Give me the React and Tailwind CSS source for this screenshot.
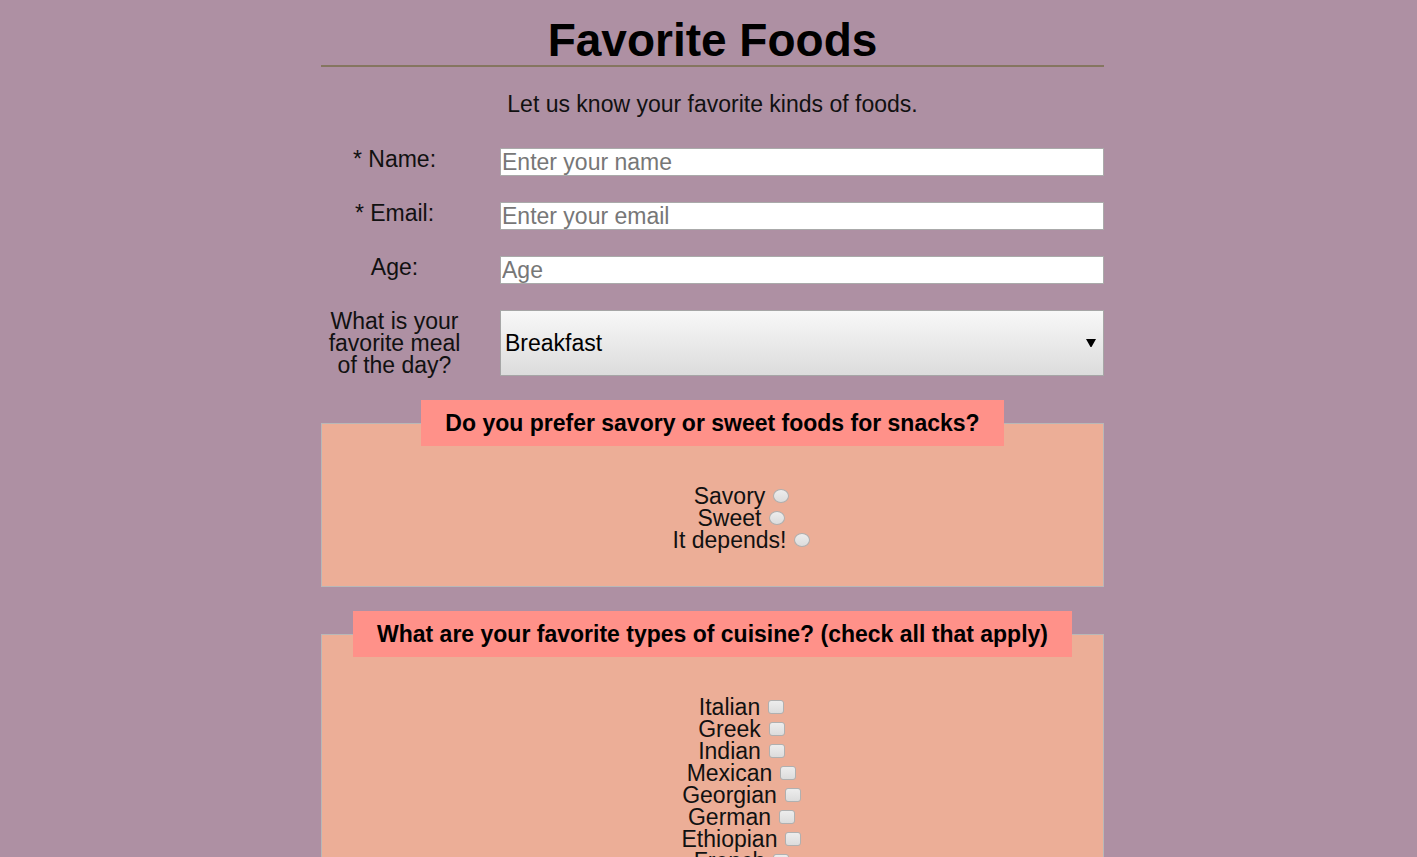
import React from "react";

const textFields = [
  { id: "name", label: "* Name:", placeholder: "Enter your name", type: "text" },
  { id: "email", label: "* Email:", placeholder: "Enter your email", type: "email" },
  { id: "age", label: "Age:", placeholder: "Age", type: "text" },
];

const snacks = ["Savory", "Sweet", "It depends!"];
const cuisines = ["Italian", "Greek", "Indian", "Mexican", "Georgian", "German", "Ethiopian", "French"];

function Choice({ type, name, label }) {
  const shape = type === "radio" ? "rounded-[50%]" : "rounded-[3px]";
  return (
    <li className="flex h-[22px] items-center justify-center gap-2">
      <label htmlFor={`${name}-${label}`}>{label}</label>
      <input
        id={`${name}-${label}`}
        type={type}
        name={name}
        value={label}
        className={`h-[14px] w-4 appearance-none border border-[#b0b0b0] bg-linear-to-b from-[#ededed] to-[#dcdcdc] checked:from-[#777] checked:to-[#555] ${shape}`}
      />
    </li>
  );
}

function ChoiceGroup({ title, type, name, options }) {
  return (
    <fieldset className="mt-6 border border-[#b8b8b8] bg-[#ecae97] pb-[35px]">
      <legend className="mx-auto bg-[#ff9189] px-6 py-3 text-[23px] leading-[22px] font-bold text-black">
        {title}
      </legend>
      <ul className="mt-[39px] pl-[58px]">
        {options.map((option) => (
          <Choice key={option} type={type} name={name} label={option} />
        ))}
      </ul>
    </fieldset>
  );
}

export default function App() {
  return (
    <div className="min-h-screen bg-[#ae90a3] pl-2 font-['Liberation_Sans',Arial,sans-serif] text-[23px] leading-[22px] text-[#111]">
      <main className="mx-auto max-w-[783px] pt-4">
        <h1 className="border-b-2 border-[#857660] text-center text-[46px] leading-[49px] font-bold text-black">
          Favorite Foods
        </h1>
        <p className="mt-[26px] text-center">Let us know your favorite kinds of foods.</p>
        <form className="mt-[33px]">
          <div className="grid grid-cols-[147px_1fr] gap-x-8 gap-y-[26px]">
            {textFields.map((field) => (
              <React.Fragment key={field.id}>
                <label htmlFor={field.id} className="text-center">{field.label}</label>
                <input
                  id={field.id}
                  type={field.type}
                  placeholder={field.placeholder}
                  className="h-7 w-full min-w-0 border border-[#aaa] bg-white px-px placeholder:text-[#777]"
                />
              </React.Fragment>
            ))}
            <label htmlFor="meal" className="text-center">What is your favorite meal of the day?</label>
            <div className="grid">
              <select
                id="meal"
                className="col-start-1 row-start-1 h-[66px] w-full appearance-none border border-[#a6a6a6] bg-linear-to-b from-[#f8f8f8] to-[#dcdcdc] px-1 text-black"
              >
                <option>Breakfast</option>
                <option>Lunch</option>
                <option>Dinner</option>
              </select>
              <svg
                viewBox="0 0 10 8"
                className="pointer-events-none col-start-1 row-start-1 mr-2 h-2 w-[10px] self-center justify-self-end"
                aria-hidden="true"
              >
                <path d="M0 0h10L5.5 8h-1z" />
              </svg>
            </div>
          </div>
          <ChoiceGroup
            title="Do you prefer savory or sweet foods for snacks?"
            type="radio"
            name="snack"
            options={snacks}
          />
          <ChoiceGroup
            title="What are your favorite types of cuisine? (check all that apply)"
            type="checkbox"
            name="cuisine"
            options={cuisines}
          />
        </form>
      </main>
    </div>
  );
}
